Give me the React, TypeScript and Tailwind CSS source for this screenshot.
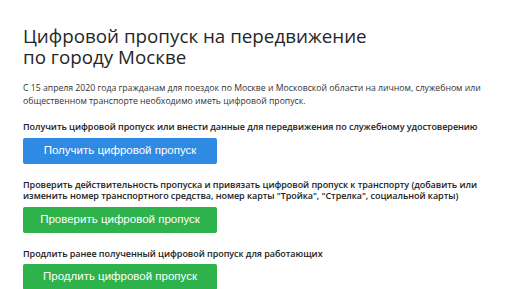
export default function App() {
  const sections = [
    {
      lines: ["Получить цифровой пропуск или внести данные для передвижения по служебному удостоверению"],
      button: "Получить цифровой пропуск",
      color: "bg-[#2f8ae3]",
    },
    {
      lines: [
        "Проверить действительность пропуска и привязать цифровой пропуск к транспорту (добавить или",
        'изменить номер транспортного средства, номер карты "Тройка", "Стрелка", социальной карты)',
      ],
      button: "Проверить цифровой пропуск",
      color: "bg-[#2eb24b]",
    },
    {
      lines: ["Продлить ранее полученный цифровой пропуск для работающих"],
      button: "Продлить цифровой пропуск",
      color: "bg-[#2eb24b]",
    },
  ];

  return (
    <div className="h-[289px] w-[516px] overflow-hidden bg-white pl-[23px] pr-[10px] pt-[26px] font-['Open_Sans',sans-serif] text-[#262626]">
      <h1 className="text-[18.8px] leading-[21px] font-medium">
        Цифровой пропуск на передвижение
        <br />
        по городу Москве
      </h1>

      <p className="mt-[14px] whitespace-nowrap text-[8.7px] leading-[13px] text-[#333]">
        С 15 апреля 2020 года гражданам для поездок по Москве и Московской области на личном, служебном или
        <br />
        общественном транспорте необходимо иметь цифровой пропуск.
      </p>

      <div className="mt-[13px] flex flex-col gap-[15px]">
        {sections.map((s) => (
          <section key={s.button}>
            <p className="whitespace-nowrap text-[9px] leading-[11.5px] font-semibold tracking-[-0.05px] text-[#222]">
              {s.lines.map((line, i) => (
                <span key={i} className="block">
                  {line}
                </span>
              ))}
            </p>
            <button
              type="button"
              className={`mt-[5px] flex h-[26px] w-[194px] items-center justify-center rounded-[2px] ${s.color} font-['Liberation_Sans',sans-serif] text-[11.5px] text-white`}
            >
              {s.button}
            </button>
          </section>
        ))}
      </div>
    </div>
  );
}
